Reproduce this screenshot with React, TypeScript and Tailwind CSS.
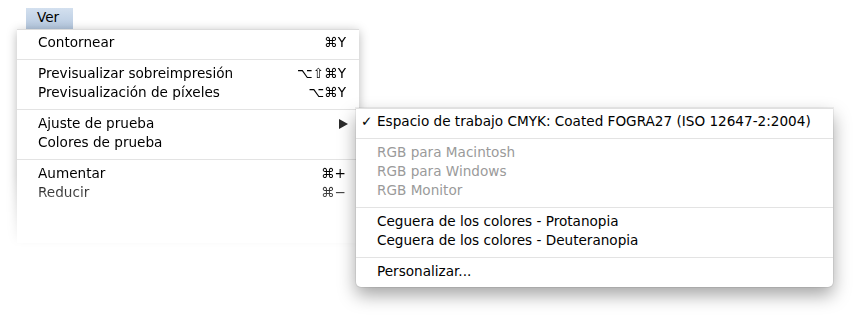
type Item = { label?: string; key?: string; sep?: boolean; disabled?: boolean; check?: boolean; arrow?: boolean };

const MAIN: Item[] = [
  { label: "Contornear", key: "⌘Y" },
  { sep: true },
  { label: "Previsualizar sobreimpresión", key: "⌥⇧⌘Y" },
  { label: "Previsualización de píxeles", key: "⌥⌘Y" },
  { sep: true },
  { label: "Ajuste de prueba", arrow: true },
  { label: "Colores de prueba" },
  { sep: true },
  { label: "Aumentar", key: "⌘+" },
  { label: "Reducir", key: "⌘−" },
];

const SUB: Item[] = [
  { label: "Espacio de trabajo CMYK: Coated FOGRA27 (ISO 12647-2:2004)", check: true },
  { sep: true },
  { label: "RGB para Macintosh", disabled: true },
  { label: "RGB para Windows", disabled: true },
  { label: "RGB Monitor", disabled: true },
  { sep: true },
  { label: "Ceguera de los colores - Protanopia" },
  { label: "Ceguera de los colores - Deuteranopia" },
  { sep: true },
  { label: "Personalizar..." },
];

function Row({ item }: { item: Item }) {
  if (item.sep) {
    return (
      <div className="flex h-[12px] items-center">
        <div className="h-px w-full bg-[#e3e3e3]" />
      </div>
    );
  }
  return (
    <div className={`flex h-[19px] items-center pb-[2px] pl-[21px] pr-[13px] ${item.disabled ? "text-[#9a9a9a]" : "text-black"}`}>
      <span className="relative flex-1 whitespace-nowrap">
        {item.check && <span className="absolute left-[-16px] top-0">✓</span>}
        {item.label}
      </span>
      {item.key && <span className="whitespace-nowrap">{item.key}</span>}
      {item.arrow && (
        <svg width="9" height="10" viewBox="0 0 9 10" className="mr-[-2px]">
          <path d="M0 0 L9 5 L0 10 Z" fill="#2a2a2a" />
        </svg>
      )}
    </div>
  );
}

export default function App() {
  return (
    <div
      className="relative h-[319px] w-[857px] overflow-hidden bg-white text-[13.6px] leading-none"
      style={{ fontFamily: '"DejaVu Sans", "Liberation Sans", sans-serif' }}
    >
      <div className="ml-[26px] mt-[8px] flex h-[21px] w-[47px] items-center bg-gradient-to-b from-[#d3e0ef] to-[#b5c8df] pb-[1px] pl-[11px] text-black">
        Ver
      </div>

      <div className="ml-[5px] mt-[-10px] w-[366px] px-[12px] pt-[10px] pb-[20px] [mask-image:linear-gradient(to_bottom,black_64%,transparent_94%)]">
        <div className="border-t border-[#dcdcdc] bg-white pt-[4px] pb-[40px] shadow-[0_2px_10px_rgba(0,0,0,0.28)]">
          {MAIN.map((item, i) => (
            <Row key={i} item={item} />
          ))}
        </div>
      </div>

      <div className="absolute left-[356px] top-[108px] w-[477px] rounded-b-[5px] border-t border-[#e0e0e0] bg-white pt-[4px] pb-[5px] shadow-[0_8px_18px_rgba(0,0,0,0.36),0_0_0_1px_rgba(0,0,0,0.06)]">
        {SUB.map((item, i) => (
          <Row key={i} item={item} />
        ))}
      </div>
    </div>
  );
}
